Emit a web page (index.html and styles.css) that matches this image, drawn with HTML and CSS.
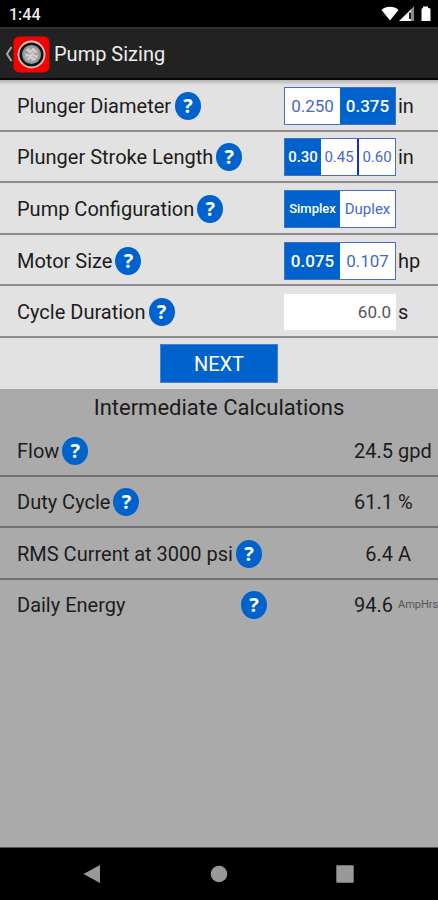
FILE: index.html
```html
<!DOCTYPE html>
<html lang="en">
<head>
<meta charset="utf-8">
<meta name="viewport" content="width=device-width, initial-scale=1">
<title>Pump Sizing</title>
<link rel="stylesheet" href="styles.css">
</head>
<body>
<div class="statusbar">
  <span class="clock">1:44</span>
  <svg class="status-icons" width="52" height="18" viewBox="0 0 52 18" aria-hidden="true">
    <path fill="#fff" d="M0.500 5C5 0.700 13 0.700 17.500 5L9 15.500z"/>
    <path fill="#fff" d="M18 16L33 1.500V16z"/>
    <path fill="#888" d="M30 4.500L33 1.500V16H30z"/>
    <path fill="#222" d="M28 7.500h2V14h-2z"/>
    <path fill="#fff" d="M42 1.500h5V3h1a1.500 1.500 0 0 1 1.500 1.500V16h-9V4.500A1.500 1.500 0 0 1 42 3z"/>
  </svg>
</div>
<header class="appbar">
  <button class="back" type="button" aria-label="Back">
    <svg width="8" height="18" viewBox="0 0 8 18"><path d="M6.500 2L2 9l4.500 7" fill="none" stroke="#aaa" stroke-width="2"/></svg>
    <svg width="37" height="37" viewBox="0 0 37 37">
      <rect x="0.500" y="0.500" width="36" height="36" rx="6" fill="#f80000"/>
      <circle cx="18.500" cy="18.500" r="13" fill="#151515" stroke="#d9c4c2" stroke-width="1.800"/>
      <circle cx="18.500" cy="18.500" r="9.500" fill="#999"/>
      <circle cx="18.500" cy="18.500" r="7" fill="#b8b8b8"/>
      <path d="M14 13l3 3 3-3 3 4M13 19l4 1 3-2 4 3M15 24l3-3 4 3" fill="none" stroke="#ddd" stroke-width="1.200"/>
      <path d="M12 16l3 1M18 12v2M24 18h-3M17 25v-2" fill="none" stroke="#888" stroke-width="1"/>
    </svg>
  </button>
  <h1>Pump Sizing</h1>
</header>
<main>
  <form class="inputs">
    <div class="rows">
      <div class="row">
        <span class="label spaced" id="diameter">Plunger Diameter</span>
        <button class="help" type="button" aria-label="Help: Plunger Diameter">?</button>
        <div class="toggle" role="radiogroup" aria-labelledby="diameter">
          <label><input type="radio" name="diameter"><span>0.250</span></label>
          <label><input type="radio" name="diameter" checked><span>0.375</span></label>
        </div>
        <span class="unit">in</span>
      </div>
      <div class="row">
        <span class="label" id="stroke">Plunger Stroke Length</span>
        <button class="help" type="button" aria-label="Help: Plunger Stroke Length">?</button>
        <div class="toggle three" role="radiogroup" aria-labelledby="stroke">
          <label><input type="radio" name="stroke" checked><span>0.30</span></label>
          <label><input type="radio" name="stroke"><span>0.45</span></label>
          <label><input type="radio" name="stroke"><span>0.60</span></label>
        </div>
        <span class="unit">in</span>
      </div>
      <div class="row">
        <span class="label" id="config">Pump Configuration</span>
        <button class="help" type="button" aria-label="Help: Pump Configuration">?</button>
        <div class="toggle words" role="radiogroup" aria-labelledby="config">
          <label><input type="radio" name="config" checked><span>Simplex</span></label>
          <label><input type="radio" name="config"><span>Duplex</span></label>
        </div>
        <span class="unit"></span>
      </div>
      <div class="row">
        <span class="label" id="motor">Motor Size</span>
        <button class="help" type="button" aria-label="Help: Motor Size">?</button>
        <div class="toggle" role="radiogroup" aria-labelledby="motor">
          <label><input type="radio" name="motor" checked><span>0.075</span></label>
          <label><input type="radio" name="motor"><span>0.107</span></label>
        </div>
        <span class="unit">hp</span>
      </div>
      <div class="row">
        <label class="label" for="cycle">Cycle Duration</label>
        <button class="help" type="button" aria-label="Help: Cycle Duration">?</button>
        <input class="field" id="cycle" type="text" inputmode="decimal" value="60.0">
        <span class="unit">s</span>
      </div>
    </div>
    <div class="actions"><button class="next" type="button">NEXT</button></div>
  </form>
  <section class="results">
    <h2>Intermediate Calculations</h2>
    <div class="rows">
      <div class="row">
        <span class="label">Flow</span>
        <button class="help" type="button" aria-label="Help: Flow">?</button>
        <output class="value">24.5</output><span class="unit">gpd</span>
      </div>
      <div class="row">
        <span class="label">Duty Cycle</span>
        <button class="help" type="button" aria-label="Help: Duty Cycle">?</button>
        <output class="value">61.1</output><span class="unit">%</span>
      </div>
      <div class="row">
        <span class="label">RMS Current at 3000 psi</span>
        <button class="help" type="button" aria-label="Help: RMS Current at 3000 psi">?</button>
        <output class="value">6.4</output><span class="unit">A</span>
      </div>
      <div class="row">
        <span class="label wide">Daily Energy</span>
        <button class="help" type="button" aria-label="Help: Daily Energy">?</button>
        <output class="value">94.6</output><span class="unit small">AmpHrs</span>
      </div>
    </div>
  </section>
</main>
<nav class="navbar">
  <button type="button" aria-label="Back"><svg width="20" height="20" viewBox="0 0 20 20"><path d="M0.500 10L17 1v18z" fill="#999"/></svg></button>
  <button type="button" aria-label="Home"><svg width="20" height="20" viewBox="0 0 20 20"><circle cx="10" cy="10" r="8.300" fill="#999"/></svg></button>
  <button type="button" aria-label="Recent apps"><svg width="20" height="20" viewBox="0 0 20 20"><rect x="1.300" y="1.300" width="17.400" height="17.400" rx="1" fill="#999"/></svg></button>
</nav>
</body>
</html>
```
FILE: styles.css
```css
* {
  box-sizing: border-box;
}

body {
  display: flex;
  flex-direction: column;
  min-height: 100vh;
  margin: 0;
  background: #aaa;
  color: #1c1c1c;
  font-family: Roboto, "Liberation Sans", sans-serif;
  font-size: 20px;
  line-height: 24px;
  overflow-x: hidden;
}

button,
input {
  margin: 0;
  padding: 0;
  border: 0;
  font: inherit;
}

button {
  background: none;
  cursor: pointer;
}

svg {
  display: block;
}

.statusbar {
  display: flex;
  justify-content: space-between;
  align-items: center;
  height: 27px;
  padding: 2px 5px 0 9px;
  background: #000;
  color: #eee;
}

.clock {
  font-size: 16px;
  font-weight: 500;
}

.status-icons {
  margin-bottom: 2px;
}

.appbar {
  display: flex;
  align-items: center;
  gap: 4px;
  height: 53px;
  padding: 1px 0 0 5px;
  border-top: 2px solid #303030;
  border-bottom: 2px solid #080808;
  background: #222;
}

.back {
  display: flex;
  align-items: center;
}

h1 {
  margin: 0;
  color: #eee;
  font-size: 20px;
  font-weight: 400;
}

main {
  flex: 1;
}

.inputs {
  background: linear-gradient(#b4b4b4, #e2e2e2 5px);
}

.rows {
  display: grid;
  grid-auto-rows: 1fr;
}

.inputs .rows {
  min-height: 258px;
}

.results .rows {
  min-height: 206px;
}

.row {
  display: flex;
  align-items: center;
  padding: 2px 0 0 17px;
  border-bottom: 2px solid #8c8c8c;
}

.results .row {
  border-color: #717171;
}

.results .row:last-child {
  border-color: transparent;
}

.label {
  white-space: nowrap;
}

.spaced {
  padding-right: 1px;
}

.wide {
  width: 221px;
}

.help {
  flex: none;
  width: 26px;
  height: 28px;
  margin-left: 3px;
  border-radius: 50%;
  background: #0062cc;
  color: #fff;
  font-family: "Open Sans", sans-serif;
  font-size: 20px;
  font-weight: 700;
  line-height: 26px;
}

.toggle,
.field,
.value {
  flex: none;
  width: 112px;
  margin-left: auto;
}

.toggle {
  display: flex;
  height: 38px;
  border: 1px solid #4a6bcb;
  background: #fff;
  color: #4669c9;
  font-size: 17px;
}

.toggle label {
  position: relative;
  flex: 1;
}

.toggle input {
  position: absolute;
  inset: 0;
  width: 100%;
  height: 100%;
  opacity: 0;
}

.toggle span {
  display: flex;
  align-items: center;
  justify-content: center;
  height: 100%;
}

.toggle input:checked + span {
  background: #0062cc;
  color: #fff;
  font-weight: 500;
}

.three,
.words {
  font-size: 15px;
}

.three label:last-child {
  border-left: 2px solid #1c30b8;
}

.words input:checked + span {
  font-size: 13px;
}

.field {
  height: 36px;
  padding-right: 5px;
  background: #fff;
  color: #555;
  font-size: 17px;
  text-align: right;
}

.value {
  padding-right: 3px;
  text-align: right;
}

.unit {
  flex: none;
  width: 42px;
  padding-left: 2px;
  white-space: nowrap;
}

.small {
  color: #555;
  font-size: 11px;
}

.actions {
  display: flex;
  justify-content: center;
  padding: 6px 0;
}

.next {
  width: 118px;
  height: 39px;
  border: 1px solid #4a7fd6;
  background: #0062cc;
  color: #fff;
}

h2 {
  margin: 0;
  padding: 7px 0 5px;
  font-size: 22px;
  font-weight: 400;
  text-align: center;
}

.navbar {
  display: flex;
  justify-content: space-between;
  align-items: center;
  height: 53px;
  padding: 0 83px;
  border-top: 1px solid #555;
  background: #000;
}
```
